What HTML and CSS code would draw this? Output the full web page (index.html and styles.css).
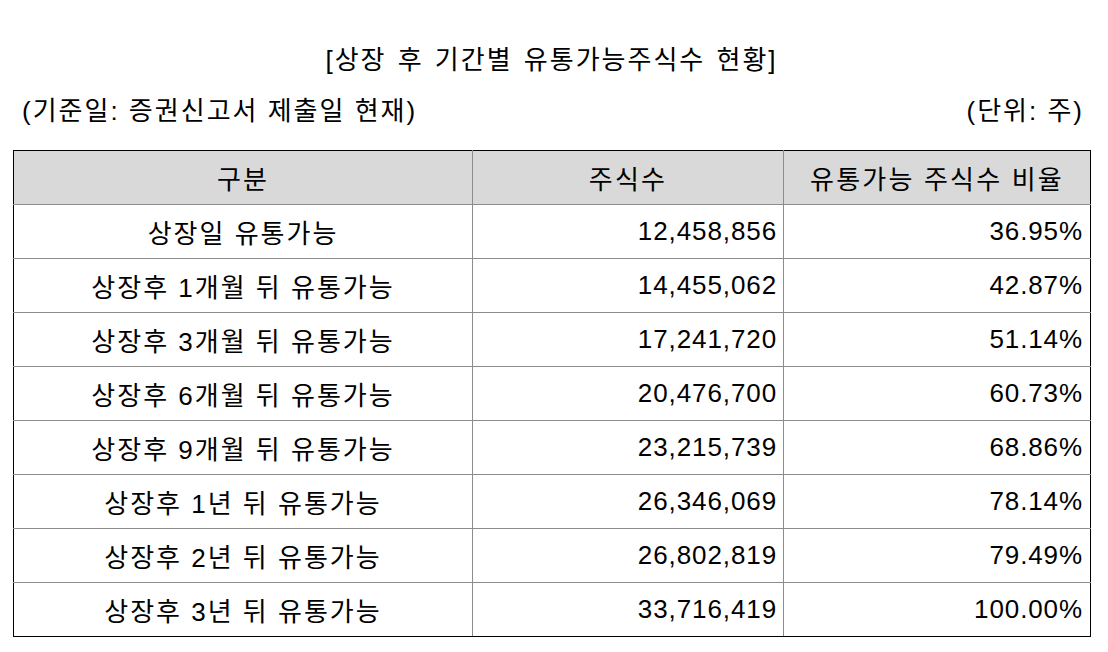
FILE: index.html
```html
<!DOCTYPE html>
<html lang="ko">
<head>
<meta charset="utf-8">
<link rel="stylesheet" href="styles.css">
</head>
<body>
<div class="page">
  <div class="title">[상장 후 기간별 유통가능주식수 현황]</div>
  <div class="meta">
    <span>(기준일: 증권신고서 제출일 현재)</span>
    <span>(단위: 주)</span>
  </div>
  <table class="tbl">
    <colgroup>
      <col class="c1"><col class="c2"><col class="c3">
    </colgroup>
    <thead>
      <tr><th>구분</th><th>주식수</th><th>유통가능 주식수 비율</th></tr>
    </thead>
    <tbody>
      <tr><td class="lbl">상장일 유통가능</td><td class="num">12,458,856</td><td class="num pct">36.95%</td></tr>
      <tr><td class="lbl">상장후 1개월 뒤 유통가능</td><td class="num">14,455,062</td><td class="num pct">42.87%</td></tr>
      <tr><td class="lbl">상장후 3개월 뒤 유통가능</td><td class="num">17,241,720</td><td class="num pct">51.14%</td></tr>
      <tr><td class="lbl">상장후 6개월 뒤 유통가능</td><td class="num">20,476,700</td><td class="num pct">60.73%</td></tr>
      <tr><td class="lbl">상장후 9개월 뒤 유통가능</td><td class="num">23,215,739</td><td class="num pct">68.86%</td></tr>
      <tr><td class="lbl">상장후 1년 뒤 유통가능</td><td class="num">26,346,069</td><td class="num pct">78.14%</td></tr>
      <tr><td class="lbl">상장후 2년 뒤 유통가능</td><td class="num">26,802,819</td><td class="num pct">79.49%</td></tr>
      <tr><td class="lbl">상장후 3년 뒤 유통가능</td><td class="num">33,716,419</td><td class="num pct">100.00%</td></tr>
    </tbody>
  </table>
</div>
</body>
</html>
```
FILE: styles.css
```css
html, body {
  margin: 0;
  padding: 0;
  background: #fff;
}
body {
  font-family: "Liberation Sans", "Noto Sans CJK KR", sans-serif;
  font-size: 26px;
  color: #000;
}
.page {
  width: 1077px;
  margin-left: 13px;
  padding-top: 41px;
}
.title {
  text-align: center;
  height: 38px;
  line-height: 38px;
  letter-spacing: 2px;
  word-spacing: 2px;
}
.meta {
  display: flex;
  justify-content: space-between;
  padding: 0 6px 0 9px;
  margin-top: 15px;
  height: 34px;
  line-height: 34px;
  letter-spacing: 2px;
}
.tbl {
  margin-top: 22px;
  width: 1077px;
  border-collapse: collapse;
  border: 1px solid #000;
  table-layout: fixed;
}
.c1 { width: 459px; }
.c2 { width: 311px; }
.c3 { width: 307px; }
.tbl th, .tbl td {
  border: 1px solid #8c8c8c;
  height: 54px;
  padding: 0 7px;
  font-weight: normal;
  letter-spacing: 2px;
  box-sizing: border-box;
}
.tbl th {
  background: #d9d9d9;
  text-align: center;
  letter-spacing: 2.2px;
}
.tbl td.lbl { text-align: center; }
.tbl td.num {
  text-align: right;
  padding-right: 6px;
  letter-spacing: 0.9px;
}
.tbl td.pct { padding-right: 7px; }
.tbl thead tr th { border-top: 1px solid #000; }
.tbl tr th:first-child, .tbl tr td:first-child { border-left: 1px solid #000; }
.tbl tr th:last-child, .tbl tr td:last-child { border-right: 1px solid #000; }
.tbl tbody tr:last-child td { border-bottom: 1px solid #000; }
```
